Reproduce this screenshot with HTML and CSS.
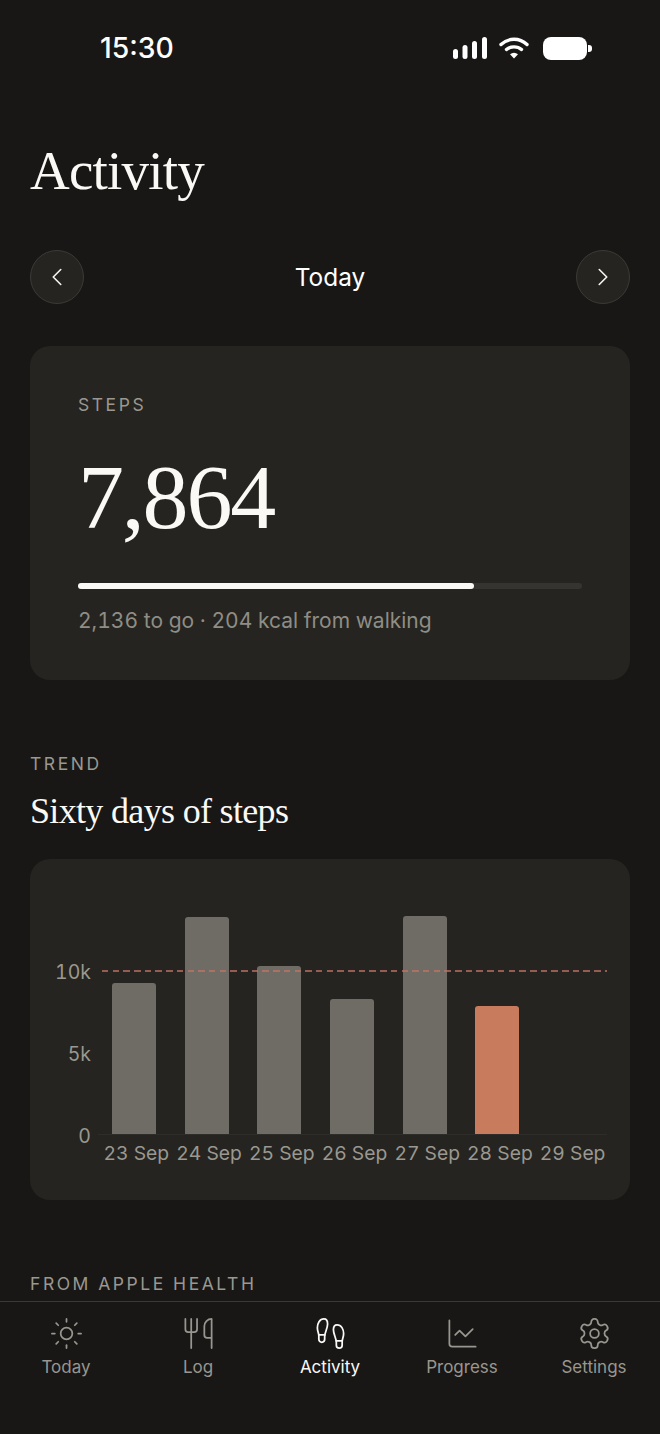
FILE: index.html
```html
<!DOCTYPE html>
<html lang="en">
<head>
    <meta charset="UTF-8">
    <meta name="viewport" content="width=device-width, initial-scale=1.0">
    <title>Activity</title>
    <link rel="stylesheet" href="styles.css">
</head>
<body>
    <div class="screen">
        <main class="content">
            <div class="status-bar">
                <span class="clock">15:30</span>
                <div class="status-icons">
                    <svg class="signal" width="34" height="22" viewBox="0 0 34 22" fill="#fff">
                        <rect x="0" y="12" width="5" height="10" rx="2.5"/>
                        <rect x="9.500" y="8" width="5" height="14" rx="2.5"/>
                        <rect x="19" y="4" width="5" height="18" rx="2.5"/>
                        <rect x="29" y="0" width="5" height="22" rx="2.5"/>
                    </svg>
                    <svg class="wifi" width="30" height="22" viewBox="0 0 30 22" fill="none" stroke="#fff" stroke-width="3.4" stroke-linecap="round">
                        <path d="M2 7.500C9.500 0.500 20.500 0.500 28 7.500"/>
                        <path d="M7.500 12.500C11.500 9 18.500 9 22.500 12.500"/>
                        <path d="M11 17.200 15 21.500 19 17.200C16.500 15.200 13.500 15.200 11 17.200Z" fill="#fff" stroke="none"/>
                    </svg>
                    <div class="battery"></div>
                </div>
            </div>

            <h1 class="page-title">Activity</h1>

            <div class="date-nav">
                <button class="round-btn">
                    <svg class="chevron" viewBox="0 0 24 24"><path d="m15 18-6-6 6-6"/></svg>
                </button>
                <span class="date-label">Today</span>
                <button class="round-btn">
                    <svg class="chevron" viewBox="0 0 24 24"><path d="m9 18 6-6-6-6"/></svg>
                </button>
            </div>

            <section class="card steps-card">
                <p class="eyebrow">STEPS</p>
                <p class="steps-count">7,864</p>
                <div class="progress"><div class="progress-fill"></div></div>
                <p class="steps-note">2,136 to go · 204 kcal from walking</p>
            </section>

            <p class="eyebrow trend-eyebrow">TREND</p>
            <h2 class="section-title">Sixty days of steps</h2>

            <section class="card chart-card">
                <div class="chart">
                    <div class="y-axis">
                        <span>10k</span>
                        <span>5k</span>
                        <span>0</span>
                    </div>
                    <div class="plot">
                        <div class="bar" style="height: 151px"></div>
                        <div class="bar" style="height: 217px"></div>
                        <div class="bar" style="height: 168px"></div>
                        <div class="bar" style="height: 135px"></div>
                        <div class="bar" style="height: 218px"></div>
                        <div class="bar today" style="height: 128px"></div>
                        <div class="bar empty"></div>
                        <div class="goal-line"></div>
                    </div>
                    <div class="x-axis">
                        <span>23 Sep</span>
                        <span>24 Sep</span>
                        <span>25 Sep</span>
                        <span>26 Sep</span>
                        <span>27 Sep</span>
                        <span>28 Sep</span>
                        <span>29 Sep</span>
                    </div>
                </div>
            </section>

            <p class="eyebrow health-eyebrow">FROM APPLE HEALTH</p>
        </main>

        <nav class="tab-bar">
            <a class="tab">
                <svg class="tab-icon" viewBox="0 0 24 24">
                    <circle cx="12" cy="12" r="4"/>
                    <path d="M12 2v2"/><path d="M12 20v2"/><path d="m4.930 4.930 1.410 1.410"/><path d="m17.660 17.660 1.410 1.410"/><path d="M2 12h2"/><path d="M20 12h2"/><path d="m6.340 17.660-1.410 1.410"/><path d="m19.070 4.930-1.410 1.410"/>
                </svg>
                <span>Today</span>
            </a>
            <a class="tab">
                <svg class="tab-icon" viewBox="0 0 24 24">
                    <path d="M3 2v7c0 1.100.9 2 2 2h4a2 2 0 0 0 2-2V2"/><path d="M7 2v20"/><path d="M21 15V2a5 5 0 0 0-5 5v6c0 1.100.9 2 2 2h3Zm0 0v7"/>
                </svg>
                <span>Log</span>
            </a>
            <a class="tab active">
                <svg class="tab-icon" viewBox="0 0 24 24">
                    <path d="M4 16v-2.380C4 11.500 2.970 10.500 3 8c.03-2.720 1.490-6 4.500-6C9.370 2 10 3.800 10 5.500c0 3.110-2 5.660-2 8.680V16a2 2 0 1 1-4 0Z"/><path d="M20 20v-2.380c0-2.120 1.030-3.120 1-5.620-.03-2.720-1.490-6-4.500-6C14.630 6 14 7.800 14 9.500c0 3.110 2 5.660 2 8.680V20a2 2 0 1 0 4 0Z"/><path d="M16 17h4"/><path d="M4 13h4"/>
                </svg>
                <span>Activity</span>
            </a>
            <a class="tab">
                <svg class="tab-icon" viewBox="0 0 24 24">
                    <path d="M3 3v16a2 2 0 0 0 2 2h16"/><path d="m19 9-5 5-4-4-3 3"/>
                </svg>
                <span>Progress</span>
            </a>
            <a class="tab">
                <svg class="tab-icon" viewBox="0 0 24 24">
                    <path d="M12.220 2h-.44a2 2 0 0 0-2 2v.18a2 2 0 0 1-1 1.730l-.43.25a2 2 0 0 1-2 0l-.15-.08a2 2 0 0 0-2.730.73l-.22.38a2 2 0 0 0 .73 2.730l.15.1a2 2 0 0 1 1 1.720v.51a2 2 0 0 1-1 1.740l-.15.09a2 2 0 0 0-.73 2.730l.22.38a2 2 0 0 0 2.730.73l.15-.08a2 2 0 0 1 2 0l.43.25a2 2 0 0 1 1 1.730V20a2 2 0 0 0 2 2h.44a2 2 0 0 0 2-2v-.18a2 2 0 0 1 1-1.730l.43-.25a2 2 0 0 1 2 0l.15.08a2 2 0 0 0 2.730-.73l.22-.39a2 2 0 0 0-.73-2.730l-.15-.08a2 2 0 0 1-1-1.740v-.5a2 2 0 0 1 1-1.740l.15-.09a2 2 0 0 0 .73-2.730l-.22-.38a2 2 0 0 0-2.730-.73l-.15.08a2 2 0 0 1-2 0l-.43-.25a2 2 0 0 1-1-1.730V4a2 2 0 0 0-2-2z"/><circle cx="12" cy="12" r="3"/>
                </svg>
                <span>Settings</span>
            </a>
        </nav>
    </div>
</body>
</html>
```

FILE: styles.css
```css
* {
    box-sizing: border-box;
}

body {
    margin: 0;
    background: #181716;
    color: #fff;
    font-family: 'Inter', sans-serif;
    font-variant-numeric: tabular-nums;
}

p, h1, h2 {
    margin: 0;
    font-weight: 400;
}

.screen {
    display: flex;
    flex-direction: column;
    height: 100vh;
    overflow: hidden;
}

.content {
    flex: 1;
    min-height: 0;
    overflow: hidden;
    padding: 0 30px;
}

/* Status bar */
.status-bar {
    display: flex;
    justify-content: space-between;
    align-items: center;
    height: 96px;
    padding: 0 39px 0 70px;
}

.clock {
    font-size: 28.300px;
    font-weight: 500;
    font-variant-numeric: normal;
}

.status-icons {
    display: flex;
    align-items: center;
    gap: 12px;
}

.wifi {
    margin-right: 2.500px;
}

.battery {
    position: relative;
    width: 44px;
    height: 23px;
    background: #fff;
    border-radius: 8px;
    margin-right: 4px;
}

.battery::after {
    content: '';
    position: absolute;
    right: -5px;
    top: 8px;
    width: 4px;
    height: 7px;
    background: #fff;
    border-radius: 0 3px 3px 0;
}

/* Headings */
.page-title {
    font-family: 'Liberation Serif', serif;
    font-size: 55px;
    line-height: 64px;
    letter-spacing: -0.8px;
    margin-top: 43px;
    color: #faf9f6;
}

.date-nav {
    display: flex;
    justify-content: space-between;
    align-items: center;
    margin-top: 47px;
}

.round-btn {
    display: flex;
    align-items: center;
    justify-content: center;
    width: 54px;
    height: 54px;
    padding: 0;
    background: #252420;
    border: 1px solid #3b3a37;
    border-radius: 50%;
}

.chevron {
    width: 30px;
    height: 30px;
    fill: none;
    stroke: #f5f4f0;
    stroke-width: 1.3;
    stroke-linecap: round;
    stroke-linejoin: round;
}

.date-label {
    font-size: 24.400px;
}

/* Cards */
.card {
    background: #252420;
    border-radius: 20px;
}

.steps-card {
    height: 334px;
    margin-top: 42px;
    padding: 48px 48px 0;
}

.eyebrow {
    font-size: 17.500px;
    line-height: 22px;
    letter-spacing: 2.550px;
    color: #9a9890;
}

.steps-count {
    font-family: 'Liberation Serif', serif;
    font-size: 92px;
    line-height: 100px;
    letter-spacing: -2.200px;
    margin-top: 31px;
    color: #faf9f6;
}

.progress {
    height: 6px;
    margin-top: 36px;
    background: #353431;
    border-radius: 3px;
}

.progress-fill {
    width: 78.6%;
    height: 100%;
    background: #faf9f6;
    border-radius: 3px;
}

.steps-note {
    font-size: 21px;
    line-height: 28px;
    margin-top: 18px;
    color: #8f8d85;
}

.trend-eyebrow {
    margin-top: 73px;
}

.section-title {
    font-family: 'Liberation Serif', serif;
    font-size: 36px;
    line-height: 46px;
    letter-spacing: -0.670px;
    margin-top: 13px;
    color: #faf9f6;
}

/* Chart */
.chart-card {
    height: 341px;
    margin-top: 25px;
    padding: 51px 23.500px 0 0;
}

.chart {
    display: grid;
    grid-template-columns: 67.500px 1fr;
    grid-template-rows: 225px auto;
}

.y-axis {
    display: flex;
    flex-direction: column;
    justify-content: space-between;
    align-items: flex-end;
    align-self: end;
    height: 182px;
    margin-bottom: -10px;
    padding-right: 6.500px;
    font-size: 19.500px;
    line-height: 18px;
    color: #9a9890;
}

.plot {
    position: relative;
    display: grid;
    grid-template-columns: repeat(7, 1fr);
    align-items: end;
    justify-items: center;
    border-bottom: 1px solid #2e2d2a;
}

.bar {
    width: 44px;
    background: #6e6c64;
    border-radius: 3px 3px 0 0;
}

.bar.today {
    background: #c97b5d;
}

.goal-line {
    position: absolute;
    left: 4px;
    right: 0;
    top: 60px;
    height: 2px;
    background: repeating-linear-gradient(90deg, rgba(200, 115, 100, 0.7) 0 6.500px, transparent 6.500px 10.700px);
}

.x-axis {
    grid-column: 2;
    display: grid;
    grid-template-columns: repeat(7, 1fr);
    justify-items: center;
    margin-top: 5px;
    padding-left: 2.500px;
    margin-right: -2.500px;
    font-size: 19.300px;
    line-height: 26px;
    white-space: nowrap;
    color: #9a9890;
}

.health-eyebrow {
    margin-top: 73px;
}

/* Tab bar */
.tab-bar {
    display: grid;
    grid-template-columns: repeat(5, 1fr);
    height: 133px;
    padding-top: 14px;
    background: #181716;
    border-top: 1px solid #3a3936;
}

.tab {
    display: flex;
    flex-direction: column;
    align-items: center;
    font-size: 17px;
    line-height: 22px;
    color: #98968e;
}

.tab-icon {
    width: 35px;
    height: 35px;
    margin-bottom: 5px;
    fill: none;
    stroke: currentColor;
    stroke-width: 1.2;
    stroke-linecap: round;
    stroke-linejoin: round;
}

.tab.active {
    color: #faf9f6;
}
```
